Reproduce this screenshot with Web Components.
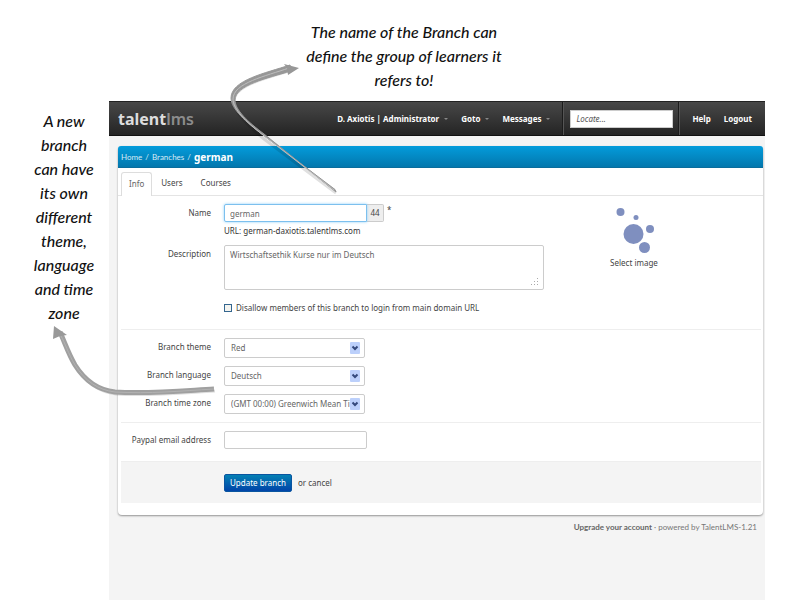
<!DOCTYPE html>
<html lang="en">
<head>
<meta charset="utf-8">
<title>TalentLMS - Branches</title>
<style>
  html{height:100%}
  body{margin:0;min-height:100%;background:#fff;color:#444;font:8px/12px "Noto Sans","Open Sans",sans-serif}
</style>
</head>
<body>
<guide-page>
  <hand-note slot="top">The name of the Branch can define the group of learners it refers to!</hand-note>
  <hand-note slot="side">A new branch can have its own different theme, language and time zone</hand-note>
  <nav-bar></nav-bar>
  <branch-panel>
    <field-group>
      <name-field></name-field>
      <description-field></description-field>
      <check-field label="Disallow members of this branch to login from main domain URL"></check-field>
      <image-picker slot="aside"></image-picker>
    </field-group>
    <field-group>
      <select-field label="Branch theme" options="Red|Blue|Green"></select-field>
      <select-field label="Branch language" options="Deutsch|English|Français"></select-field>
      <select-field label="Branch time zone" options="(GMT 00:00) Greenwich Mean Time|(GMT +01:00) Berlin"></select-field>
    </field-group>
    <field-group>
      <text-field label="Paypal email address"></text-field>
    </field-group>
    <form-actions></form-actions>
  </branch-panel>
  <page-footer></page-footer>
</guide-page>

<script>
const BASE = `
  *,*::before,*::after{box-sizing:border-box}
  :host{display:block;box-sizing:border-box}
  a{color:inherit;text-decoration:none}
  button,input,select,textarea{font:inherit;color:inherit;margin:0}`;

// label column + control column, shared by all fields
const ROW = `${BASE}
  .row{display:grid;grid-template-columns:90px minmax(0,1fr);column-gap:13px;align-items:start}
  .row>label{text-align:right;padding-top:3px;color:#444}
  .ctl{height:18px;width:143px;padding:0 5px;border:1px solid #ccc;border-radius:2px;background:#fff;color:#666;outline:0}`;

const define = (name, html, setup) => customElements.define(name, class extends HTMLElement {
  constructor() { super(); this.attachShadow({ mode: "open" }); }
  connectedCallback() {
    this.shadowRoot.innerHTML = typeof html === "function" ? html(this) : html;
    if (setup) setup(this.shadowRoot, this);
  }
});

define("guide-page", `
  <style>${BASE}
    :host{position:relative;display:grid;grid-template-columns:109px minmax(0,1fr) 35px;grid-template-rows:101px auto;min-height:100vh;overflow:hidden}
    .top{grid-column:1/-1;display:flex;justify-content:center;padding:20px 0 0 8px}
    .top ::slotted(*){width:216px}
    .side{padding:8px 10px 0 29px}
    .app{background:#f4f4f4}
    svg{position:absolute;left:0;top:0;pointer-events:none}
  </style>
  <div class="top"><slot name="top"></slot></div>
  <div class="side"><slot name="side"></slot></div>
  <main class="app"><slot></slot></main>
  <svg width="400" height="420" viewBox="0 0 400 420" fill="none" aria-hidden="true">
    <g transform="translate(1 2)" opacity=".12" stroke="#000" stroke-width="3">
      <path d="M335 191L263 137C246 123 233 110 233 99C233 82 268 76 290 68"/>
      <path d="M214 389C180 391 150 394 115 392C98 390 85 381 75 365C68 353 65 343 60 334"/>
    </g>
    <path d="M335 189.500L263 135C246 122 231 109 231 98C231 80 266 73 290 65L291 71C268 78 235 85 235 100C235 110 248 122 264 134L336 192Z" fill="#979797" stroke="#979797" stroke-width="1"/>
    <path d="M334 190L263 135C246 122 233 109 233 99C233 83 266 76 289 68" stroke="#bdbdbd" stroke-width="1"/>
    <path d="M299 68L284 64L287 68L288 75Z" fill="#979797"/>
    <path d="M214 389C180 391 150 394 115 392C98 390 85 381 75 365C68 353 65 343 60 332" stroke="#a0a0a0" stroke-width="5"/>
    <path d="M214 389C180 391 150 394 115 392C98 390 85 381 75 365C68 353 65 343 61 336" stroke="#b2b2b2" stroke-width="1"/>
    <path d="M54 326L53 339L60 336L67 335Z" fill="#999"/>
  </svg>`);

define("hand-note", `
  <style>${BASE}
    :host{color:#111;font:italic 500 16px/24px Lato,sans-serif;text-align:center}
  </style>
  <slot></slot>`);

define("nav-bar", `
  <style>${BASE}
    :host{background:linear-gradient(#484848,#242424);border-top:1px solid #222;border-bottom:1px solid #111;color:#fff;font-weight:700}
    nav{display:flex;align-items:stretch;height:33px}
    .brand{display:flex;align-items:center;padding-left:9px;margin-right:auto;font-size:16px;color:#ddd}
    .brand span{color:#8c8c8c;font-weight:600}
    .menu{display:flex;align-items:center;gap:13px;padding-right:13px}
    .menu button{display:flex;align-items:center;gap:5px;padding:0;border:0;background:none;font-weight:700;color:#fff}
    .menu button::after{content:"";border:2px solid transparent;border-top-color:#888;border-bottom:0}
    form,.links{display:flex;align-items:center;border-left:1px solid #555;box-shadow:-1px 0 #1c1c1c}
    form{padding:0 6px}
    input{width:103px;height:18px;padding:0 5px;border:1px solid #ccc;background:#fff;font-weight:400;font-style:italic;color:#555}
    input::placeholder{color:#555}
    .links{gap:13px;padding:0 13px 0 12px}
  </style>
  <nav>
    <a class="brand" href="#">talent<span>lms</span></a>
    <div class="menu">
      <button type="button">D. Axiotis | Administrator</button>
      <button type="button">Goto</button>
      <button type="button">Messages</button>
    </div>
    <form role="search"><input type="text" placeholder="Locate..." aria-label="Locate"></form>
    <div class="links"><a href="#">Help</a><a href="#">Logout</a></div>
  </nav>`);

define("branch-panel", `
  <style>${BASE}
    :host{margin:10px 2px 0 9px;padding-bottom:12px;background:#fff;border-radius:4px;box-shadow:0 1px 2px rgba(0,0,0,.4)}
    header{display:flex;align-items:center;gap:3px;height:22px;padding:0 3px;border-radius:3px 3px 0 0;background:linear-gradient(#049cdb,#0377ad);border-bottom:1px solid #0a6d9c;color:#d5ecf8;font-family:Lato,sans-serif}
    h1{margin:0;font:700 10px/12px "Noto Sans",sans-serif;color:#fff}
    .tabs{display:flex;height:24px;margin-top:4px;padding:0 3px;border-bottom:1px solid #e4e4e4}
    .tabs a{padding:5px 8px;margin-right:2px}
    .tabs .on{height:24px;padding:5px 7px;margin-right:1px;border:1px solid #ddd;border-bottom:0;border-radius:3px 3px 0 0;background:#fff;color:#666}
    .body{padding:0 2px 0 3px}
  </style>
  <header><a href="#">Home</a><span>/</span><a href="#">Branches</a><span>/</span><h1>german</h1></header>
  <div class="tabs"><a class="on" href="#">Info</a><a href="#">Users</a><a href="#">Courses</a></div>
  <div class="body"><slot></slot></div>`);

define("field-group", `
  <style>${BASE}
    :host{padding:8px 0;border-bottom:1px solid #eee}
    .cols{display:flex;align-items:flex-start}
    .fields{flex:1;display:grid;row-gap:8px;min-width:0}
  </style>
  <div class="cols"><div class="fields"><slot></slot></div><slot name="aside"></slot></div>`);

define("name-field", `
  <style>${ROW}
    .group{display:flex}
    .ctl{border-color:#7cc0ee;border-radius:2px 0 0 2px;box-shadow:0 0 3px #8fd0fa;z-index:1}
    .count{width:17px;line-height:16px;text-align:center;border:1px solid #ccc;border-left:0;border-radius:0 2px 2px 0;background:#eee}
    .star{padding-left:3px}
    .url{padding-top:3px;color:#333}
  </style>
  <div class="row">
    <label for="name">Name</label>
    <div>
      <div class="group"><input class="ctl" id="name" type="text" value="german"><span class="count" id="count">44</span><span class="star">*</span></div>
      <div class="url">URL: <span id="url">german</span>-daxiotis.talentlms.com</div>
    </div>
  </div>`, (root) => {
  const $ = (s) => root.querySelector(s);
  $("#name").addEventListener("input", (e) => {
    $("#count").textContent = 50 - e.target.value.length;
    $("#url").textContent = e.target.value;
  });
});

define("description-field", `
  <style>${ROW}
    .box{position:relative;width:320px}
    textarea.ctl{display:block;width:100%;height:45px;padding:3px 5px;resize:none}
    svg{position:absolute;right:5px;bottom:4px}
  </style>
  <div class="row">
    <label for="desc">Description</label>
    <div class="box">
      <textarea class="ctl" id="desc">Wirtschaftsethik Kurse nur im Deutsch</textarea>
      <svg width="8" height="8" viewBox="0 0 8 8" fill="#aaa" aria-hidden="true"><path d="M6 0h1v1h-1zM3 3h1v1h-1zM6 3h1v1h-1zM0 6h1v1h-1zM3 6h1v1h-1zM6 6h1v1h-1z"/></svg>
    </div>
  </div>`);

define("check-field", (el) => `
  <style>${BASE}
    :host{padding:4px 0 7px 103px}
    label{display:flex;align-items:center;gap:4px}
    input{appearance:none;width:8px;height:8px;border:1px solid #34668f;background:#f4f4f0}
    input:checked{background:#34668f}
  </style>
  <label><input type="checkbox">${el.getAttribute("label")}</label>`);

define("select-field", (el) => `
  <style>${ROW}
    .box{position:relative;width:141px}
    select.ctl{appearance:none;display:block;width:100%;height:20px;padding:0 14px 0 6px}
    svg{position:absolute;right:5px;top:4px;pointer-events:none}
  </style>
  <div class="row">
    <label for="sel">${el.getAttribute("label")}</label>
    <div class="box">
      <select class="ctl" id="sel">${el.getAttribute("options").split("|").map((o) => `<option>${o}</option>`).join("")}</select>
      <svg width="10" height="12" viewBox="0 0 10 12" aria-hidden="true"><rect width="10" height="12" rx="1" fill="#bcd0fb"/><path d="M2.500 4.500L5 7L7.500 4.500" fill="none" stroke="#34497c" stroke-width="2"/></svg>
    </div>
  </div>`);

define("text-field", (el) => `
  <style>${ROW}
    :host{padding-bottom:4px}
  </style>
  <div class="row"><label for="txt">${el.getAttribute("label")}</label><input class="ctl" id="txt" type="text"></div>`);

define("image-picker", `
  <style>${BASE}
    :host{width:218px;padding-left:49px}
    button{display:grid;justify-items:center;gap:3px;width:84px;padding:0;border:0;background:none}
  </style>
  <button type="button">
    <svg width="40" height="50" viewBox="0 0 40 50" fill="#7f8fbf" aria-hidden="true"><circle cx="6.500" cy="8" r="4"/><circle cx="22" cy="13.500" r="2.500"/><circle cx="19.500" cy="30" r="10"/><circle cx="36" cy="25" r="4"/><circle cx="30.500" cy="43.500" r="5.500"/></svg>
    Select image
  </button>`);

define("form-actions", `
  <style>${BASE}
    :host{display:flex;align-items:center;gap:6px;height:41px;padding-left:103px;background:#f4f4f4}
    button{height:18px;padding:0 5px;border:1px solid #0a55a0;border-radius:2px;background:linear-gradient(#0480b4,#0044a8);color:#fff}
  </style>
  <button type="submit">Update branch</button><span>or <a href="#">cancel</a></span>`);

define("page-footer", `
  <style>${BASE}
    :host{padding:6px 8px;text-align:right;color:#777;font-family:Lato,sans-serif}
    a{font-weight:700;color:#666}
  </style>
  <a href="#">Upgrade your account</a> · powered by TalentLMS-1.21`);
</script>
</body>
</html>
